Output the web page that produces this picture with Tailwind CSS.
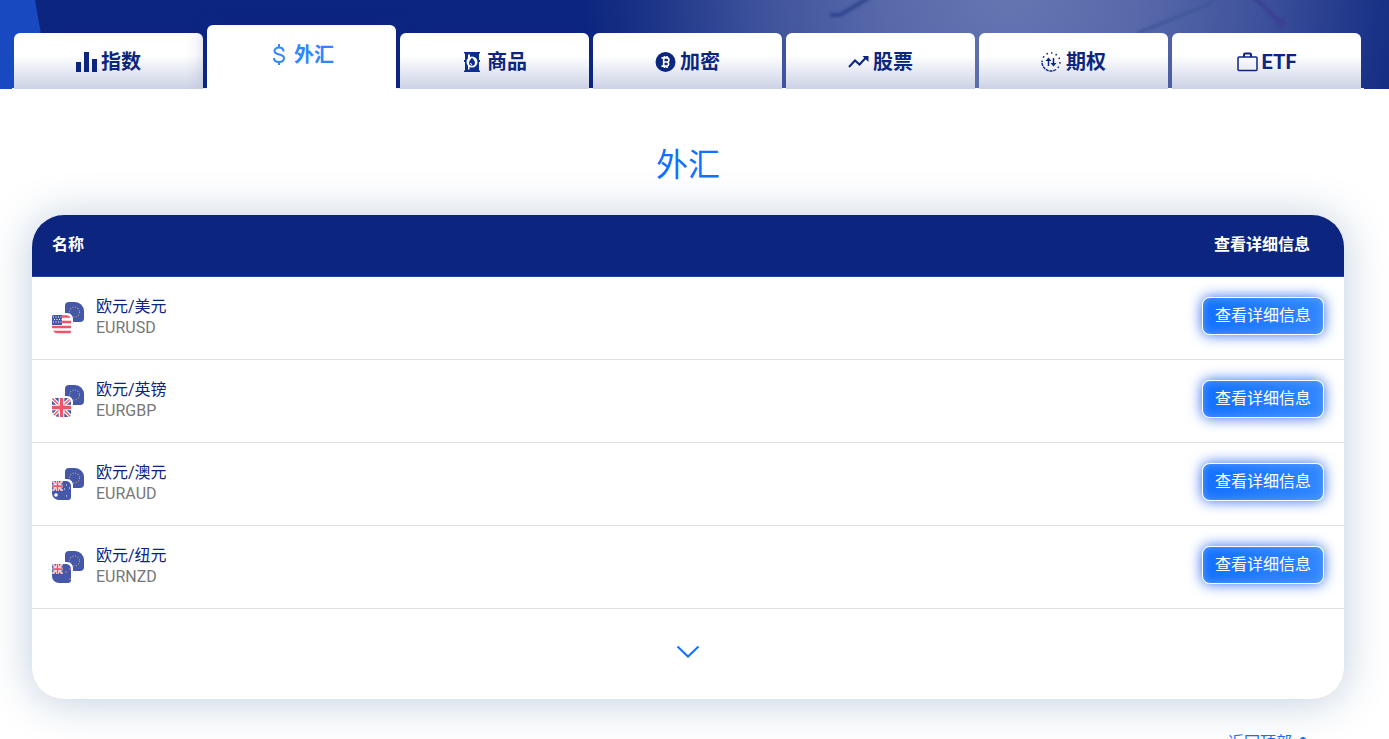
<!DOCTYPE html>
<html lang="zh-CN">
  <head>
    <meta charset="UTF-8" />
    <meta name="viewport" content="width=device-width, initial-scale=1.0" />
    <title>外汇</title>
    <script src="https://cdn.jsdelivr.net/npm/@tailwindcss/browser@4"></script>
  </head>
  <body class="bg-white font-['Roboto','Noto_Sans_CJK_SC',sans-serif] text-base text-[#0c2680] overflow-x-hidden">

    <!-- Shared icons -->
    <svg class="absolute size-0">
      <defs>
        <clipPath id="backShape"><path d="M17 0h6a9 9 0 0 1 9 9v7a4 4 0 0 1-4 4H16a3 3 0 0 1-3-3V4a4 4 0 0 1 4-4z" /></clipPath>
        <clipPath id="frontShape"><path d="M2 13h12a5 5 0 0 1 5 5v11a3 3 0 0 1-3 3H7a7 7 0 0 1-7-7V15a2 2 0 0 1 2-2z" /></clipPath>
      </defs>
      <symbol id="flag-eu" viewBox="0 0 32 32">
        <rect x="13" width="19" height="20" fill="#4557a8" clip-path="url(#backShape)" />
        <circle cx="22.500" cy="10" r="5" fill="none" stroke="#b3a570" stroke-width="1.100" stroke-dasharray="1.100 1.518" />
        <path d="M0 11h15a6 6 0 0 1 6 6v15H0z" fill="#fff" />
      </symbol>
      <symbol id="union" viewBox="0 0 20 20">
        <rect width="20" height="20" fill="#4557a8" />
        <path d="M0 0l20 20M20 0L0 20" stroke="#fff" stroke-width="4" />
        <path d="M0 0l20 20M20 0L0 20" stroke="#f0536a" stroke-width="1.500" />
        <path d="M10 0v20M0 10h20" stroke="#fff" stroke-width="6" />
        <path d="M10 0v20M0 10h20" stroke="#f0536a" stroke-width="3.500" />
      </symbol>
    </svg>

    <!-- Banner and tabs -->
    <header class="relative bg-[#0c2680] pt-[25px] overflow-hidden">
      <svg class="absolute inset-0 w-full h-full" viewBox="0 0 1389 89" preserveAspectRatio="none">
        <defs>
          <radialGradient id="glow" gradientUnits="userSpaceOnUse" cx="1010" cy="-10" r="425">
            <stop offset="0" stop-color="#6676b2" />
            <stop offset="0.300" stop-color="#5869aa" />
            <stop offset="0.600" stop-color="#3d519b" />
            <stop offset="0.850" stop-color="#1c3487" />
            <stop offset="1" stop-color="#0c2680" />
          </radialGradient>
          <filter id="soft" x="-20%" y="-50%" width="140%" height="200%"><feGaussianBlur stdDeviation="1.500" /></filter>
        </defs>
        <rect x="580" width="809" height="89" fill="url(#glow)" />
        <g filter="url(#soft)" fill="none" stroke-width="4">
          <path d="M830 15h10l30-18" stroke="#2f458f" />
          <path d="M1138 33l72-29 4-8" stroke="#40569a" stroke-width="3" />
          <path d="M1253-4l27 26" stroke="#3b3f93" />
          <circle cx="1281" cy="23" r="3" stroke="#3b3f93" />
        </g>
        <path d="M0 0h35l7 40v49H0z" fill="#1849c0" />
      </svg>
      <nav class="relative ml-3 mr-[25px] border-b border-white">
        <ul class="-mb-px pl-0.5 pr-[3px] flex items-end gap-1 text-xl font-bold leading-6">
          <li class="flex-1">
            <a href="#indices" class="h-14 pt-0.5 flex items-center justify-center gap-[3px] rounded-t-md bg-linear-to-b from-white from-40% to-[#ccd2e5]">
              <svg class="size-[22px]" viewBox="0 0 22 22" fill="#0c2680"><path d="M0 11h5v10H0zM8 1h5v20H8zM16 8h5v13h-5z" /></svg>
              指数
            </a>
          </li>
          <li class="flex-1">
            <a href="#forex" class="relative h-16 pb-1 flex items-center justify-center gap-[3px] rounded-t-md bg-white text-[#2f86ff] shadow-[0_0_20px_#0c268050]">
              <svg class="size-[22px]" viewBox="0 0 22 22" fill="none" stroke="#2f86ff" stroke-width="2"><path d="M10 0v4M10 17v4M14.500 7.500C14.500 5 12.500 3.500 10 3.500S5.500 5 5.500 7c0 4.500 9.500 2.500 9.500 7 0 2.500-2 4-5 4s-5-1.500-5-4" /></svg>
              外汇
            </a>
          </li>
          <li class="relative flex-1">
            <a href="#commodities" class="h-14 pt-0.5 flex items-center justify-center gap-[3px] rounded-t-md bg-linear-to-b from-white from-40% to-[#ccd2e5]">
              <svg class="size-[22px]" viewBox="0 0 22 22">
                <path d="M2 1h16v1.500h-1V9h1v2h-1v8.500h1V21H2v-1.500h1V11H2V9h1V2.500H2z" fill="#0c2f8f" />
                <path d="M6 3.500h2v4H6zM6 15h1.500v3.500H6z" fill="#fff" />
                <circle cx="10" cy="11" r="5.500" fill="#fff" />
                <path d="M10 6.500c1.500 2 3 3.500 3 5.200a3 3 0 0 1-6 0c0-1.700 1.500-3.200 3-5.200z" fill="#0c2f8f" />
                <path d="M8.500 12a1.500 1.500 0 0 0 1.500 1.500" fill="none" stroke="#fff" />
              </svg>
              商品
            </a>
          </li>
          <li class="relative flex-1">
            <a href="#crypto" class="h-14 pt-0.5 flex items-center justify-center gap-[3px] rounded-t-md bg-linear-to-b from-white from-40% to-[#ccd2e5]">
              <svg class="size-[22px]" viewBox="0 0 22 22">
                <circle cx="10.500" cy="11" r="10" fill="#0c2680" />
                <path d="M6.500 6.800h5.300a2 2 0 0 1 0 4.200H9M6.500 15.200h5.600a2.200 2.200 0 0 0 0-4.200M8.700 6.500v9M9.500 5v2M12 5v2M9.500 15v2M12 15v2" fill="none" stroke="#fff" stroke-width="1.700" />
              </svg>
              加密
            </a>
          </li>
          <li class="relative flex-1">
            <a href="#stocks" class="h-14 pt-0.5 flex items-center justify-center gap-[3px] rounded-t-md bg-linear-to-b from-white from-40% to-[#ccd2e5]">
              <svg class="size-[22px]" viewBox="0 0 22 22" fill="none" stroke="#0c2680" stroke-width="2"><path d="M1 16l6-6.500 4.500 4 7-7.500" /><path d="M14.500 5h6v6z" fill="#0c2680" stroke="none" /></svg>
              股票
            </a>
          </li>
          <li class="relative flex-1">
            <a href="#options" class="h-14 pt-0.5 flex items-center justify-center gap-[3px] rounded-t-md bg-linear-to-b from-white from-40% to-[#ccd2e5]">
              <svg class="size-[22px]" viewBox="0 0 22 22" fill="none" stroke="#0c2680" stroke-width="1.500">
                <path d="M15 18.500A9 9 0 0 1 1 11" stroke-dasharray="3 0.800" />
                <path d="M1 11A9 9 0 0 1 19 11a9 9 0 0 1-4 7.500" stroke-dasharray="1.500 3.200" />
                <path d="M7.500 15V8M12.500 7v7" />
                <path d="M4.500 10l3-3.500 3 3.500zM9.500 12l3 3.500 3-3.500z" fill="#0c2680" stroke="none" />
              </svg>
              期权
            </a>
          </li>
          <li class="relative flex-1">
            <a href="#etf" class="h-14 pt-0.5 flex items-center justify-center gap-[3px] rounded-t-md bg-linear-to-b from-white from-40% to-[#ccd2e5]">
              <svg class="size-[22px]" viewBox="0 0 22 22" fill="none" stroke="#0c2680" stroke-width="1.500"><rect x="1" y="6" width="19" height="13.500" rx="1" /><path d="M7 6V3.500a1 1 0 0 1 1-1h5a1 1 0 0 1 1 1V6" stroke-width="2" /></svg>
              ETF
            </a>
          </li>
        </ul>
      </nav>
    </header>

    <!-- Instruments -->
    <main class="relative bg-white pt-14 pl-8 pr-[45px]">
      <h1 class="text-center text-[32px] leading-10 font-normal text-[#1270ff]">外汇</h1>

      <div class="mt-[30px] rounded-4xl bg-white overflow-hidden shadow-[0_2px_44px_#0b488045]">
        <table class="w-full text-left leading-[21px]">
          <thead class="bg-[#0c2680] text-white">
            <tr class="border-b border-[#1a4590]">
              <th class="px-5 pt-[19px] pb-[21px] font-bold">名称</th>
              <th class="w-[142px] pr-5 pt-[19px] pb-[21px] pl-3 font-bold">查看详细信息</th>
            </tr>
          </thead>
          <tbody>
            <tr class="border-b border-[#dee2e6]">
              <td class="px-5 pt-[19px] pb-[21px]">
                <div class="flex items-center gap-3">
                  <svg class="size-8 mt-0.5" viewBox="0 0 32 32">
                    <use href="#flag-eu" />
                    <g clip-path="url(#frontShape)">
                      <path d="M0 13h19v19H0z" fill="#fff" />
                      <path d="M0 14.500h19M0 20h19M0 25h19M0 30h19" stroke="#f0536a" stroke-width="2.700" />
                      <path d="M0 13h10v10H0z" fill="#4557a8" />
                      <path d="M1 15h9M2 17.500h8M1 20h9" stroke="#fff" stroke-dasharray="1 1.500" />
                    </g>
                  </svg>
                  <div><p>欧元/美元</p><p class="text-[#777]">EURUSD</p></div>
                </div>
              </td>
              <td class="pt-5 pr-5 align-top"><button class="block w-[122px] h-[38px] pb-0.5 whitespace-nowrap rounded-lg border border-white bg-linear-to-r from-[#1270ff] to-[#3187ff] text-white shadow-[0_0_14px_#2f6bf0,inset_0_0_10px_#5c9fff]">查看详细信息</button></td>
            </tr>
            <tr class="border-b border-[#dee2e6]">
              <td class="px-5 pt-[19px] pb-[21px]">
                <div class="flex items-center gap-3">
                  <svg class="size-8 mt-0.5" viewBox="0 0 32 32">
                    <use href="#flag-eu" />
                    <g clip-path="url(#frontShape)"><use href="#union" y="13" width="19" height="19" /></g>
                  </svg>
                  <div><p>欧元/英镑</p><p class="text-[#777]">EURGBP</p></div>
                </div>
              </td>
              <td class="pt-5 pr-5 align-top"><button class="block w-[122px] h-[38px] pb-0.5 whitespace-nowrap rounded-lg border border-white bg-linear-to-r from-[#1270ff] to-[#3187ff] text-white shadow-[0_0_14px_#2f6bf0,inset_0_0_10px_#5c9fff]">查看详细信息</button></td>
            </tr>
            <tr class="border-b border-[#dee2e6]">
              <td class="px-5 pt-[19px] pb-[21px]">
                <div class="flex items-center gap-3">
                  <svg class="size-8 mt-0.5" viewBox="0 0 32 32">
                    <use href="#flag-eu" />
                    <g clip-path="url(#frontShape)">
                      <path d="M0 13h19v19H0z" fill="#4557a8" />
                      <use href="#union" y="13" width="11" height="10" />
                      <circle cx="4" cy="27" r="1.800" fill="#fff" />
                      <path d="M14 17h1M17 20h1M12 21h1M14 28h1" stroke="#fff" />
                    </g>
                  </svg>
                  <div><p>欧元/澳元</p><p class="text-[#777]">EURAUD</p></div>
                </div>
              </td>
              <td class="pt-5 pr-5 align-top"><button class="block w-[122px] h-[38px] pb-0.5 whitespace-nowrap rounded-lg border border-white bg-linear-to-r from-[#1270ff] to-[#3187ff] text-white shadow-[0_0_14px_#2f6bf0,inset_0_0_10px_#5c9fff]">查看详细信息</button></td>
            </tr>
            <tr class="border-b border-[#dee2e6]">
              <td class="px-5 pt-[19px] pb-[21px]">
                <div class="flex items-center gap-3">
                  <svg class="size-8 mt-0.5" viewBox="0 0 32 32">
                    <use href="#flag-eu" />
                    <g clip-path="url(#frontShape)">
                      <path d="M0 13h19v19H0z" fill="#4557a8" />
                      <use href="#union" y="13" width="11" height="10" />
                      <path d="M13 21h2M17 18h2M17 28h2" stroke="#c06a92" stroke-width="1.500" />
                    </g>
                  </svg>
                  <div><p>欧元/纽元</p><p class="text-[#777]">EURNZD</p></div>
                </div>
              </td>
              <td class="pt-5 pr-5 align-top"><button class="block w-[122px] h-[38px] pb-0.5 whitespace-nowrap rounded-lg border border-white bg-linear-to-r from-[#1270ff] to-[#3187ff] text-white shadow-[0_0_14px_#2f6bf0,inset_0_0_10px_#5c9fff]">查看详细信息</button></td>
            </tr>
          </tbody>
        </table>
        <button class="w-full h-[90px] pb-1 flex items-center justify-center" aria-label="展开">
          <svg class="w-6 h-4" viewBox="0 0 24 16" fill="none" stroke="#1270ff" stroke-width="2"><path d="M1.500 2.500L12 12.500l10.500-10" /></svg>
        </button>
      </div>

      <div class="pt-8 pr-9 pb-10 flex justify-end">
        <a href="#" class="flex items-center gap-1 leading-6 text-[#1270ff]">
          返回顶部
          <svg class="size-3" viewBox="0 0 12 12" fill="none" stroke="#1270ff" stroke-width="2"><path d="M2.500 4.500L7 0.500l4.500 4" /></svg>
        </a>
      </div>
    </main>
  </body>
</html>
